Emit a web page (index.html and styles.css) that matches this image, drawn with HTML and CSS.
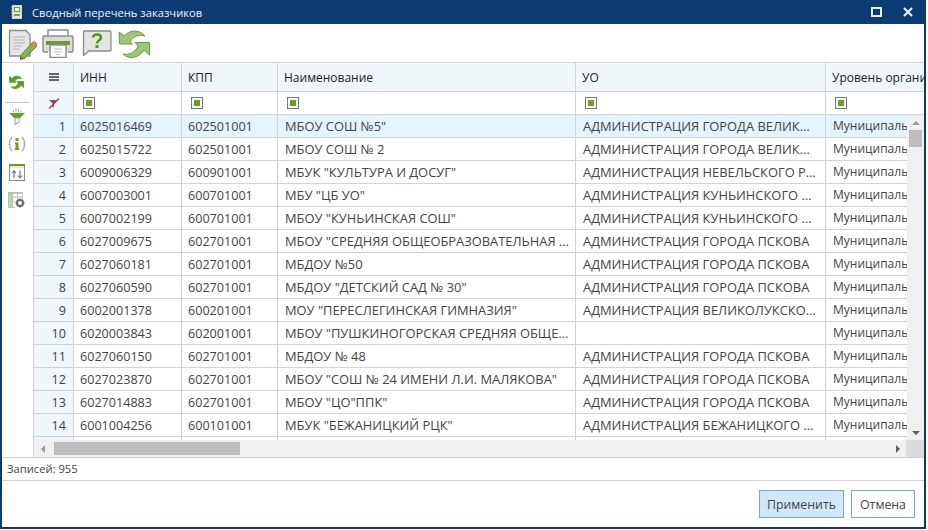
FILE: index.html
```html
<!DOCTYPE html>
<html lang="en">
<head>
    <meta charset="UTF-8">
    <title>Сводный перечень заказчиков</title>
    <link rel="stylesheet" href="styles.css">
</head>
<body>

<div class="window">
    <div class="titlebar">
        <svg class="title-icon" width="11" height="14" viewBox="0 0 11 14">
            <rect x="1.5" y="0.5" width="9" height="13" fill="#dfe6e2" stroke="#cfd6d6"/>
            <path d="M0 2 H2 M0 5 H2 M0 8 H2 M0 11 H2" stroke="#b8c4cc" stroke-width="1"/>
            <rect x="3.5" y="2.5" width="5" height="4" fill="#eef3e4" stroke="#6d9c2e"/>
            <rect x="3" y="9" width="6" height="2" fill="#7fa648"/>
        </svg>
        <span class="title-text">Сводный перечень заказчиков</span>
        <div class="title-buttons">
            <svg width="12" height="10" viewBox="0 0 12 10"><rect x="1" y="1" width="9" height="8" fill="none" stroke="#e8eef5" stroke-width="2"/></svg>
            <svg width="10" height="10" viewBox="0 0 10 10"><path d="M1 1 L9 9 M9 1 L1 9" stroke="#e8eef5" stroke-width="2.2"/></svg>
        </div>
    </div>

    <div class="toolbar">
        <svg width="30" height="32" viewBox="0 0 30 32">
            <path d="M1.5 1.5 H18 L22 6 V27 H1.5 Z" fill="#e6e6e6" stroke="#8c8c8c" stroke-width="1.3"/>
            <path d="M5 8 H17 M5 11 H17 M5 14 H17 M5 17 H14 M5 20 H11" stroke="#b5b5b5" stroke-width="1"/>
            <path d="M12 27 L25 13 L29 17 L16 30 Z" fill="#86b34a" stroke="#5e8f2a" stroke-width="1"/>
            <path d="M24 14 L26 11.5 L29.5 15 L27.5 17.5 Z" fill="#e9707a"/>
            <path d="M12 27 L16 30 L12 31 Z" fill="#666"/>
        </svg>
        <svg class="tool-print" width="32" height="29" viewBox="0 0 32 29">
            <path d="M6 8 V1 H26 V8" fill="#fff" stroke="#8c8c8c" stroke-width="1.4"/>
            <path d="M6 23 H2 A1 1 0 0 1 1 22 V8 A1 1 0 0 1 2 7 H30 A1 1 0 0 1 31 8 V22 A1 1 0 0 1 30 23 H26" fill="#dcdcdc" stroke="#8c8c8c" stroke-width="1.4"/>
            <rect x="4" y="12" width="24" height="4" fill="#6d9c2e"/>
            <rect x="8" y="16" width="16" height="12.5" fill="#fff" stroke="#8c8c8c" stroke-width="1.4"/>
            <path d="M12 20 H20 M12 23 H20 M14 25.5 H18" stroke="#bdbdbd" stroke-width="1"/>
        </svg>
        <svg class="tool-help" width="30" height="26" viewBox="0 0 30 26">
            <path d="M1.5 1 H28 A1 1 0 0 1 29 2 V20 A1 1 0 0 1 28 21 H7 L1.5 25.5 V2 A1 1 0 0 1 2 1 Z" fill="#e4e4e4" stroke="#8c8c8c" stroke-width="1.3"/>
            <path d="M11 7.5 C11 3.5 19 3.5 19 7.5 C19 10.5 15 10 15 13.5" fill="none" stroke="#4f9a1e" stroke-width="2.6"/>
            <rect x="13.5" y="15" width="3" height="3" fill="#4f9a1e"/>
        </svg>
        <svg class="tool-sync" width="32" height="31" viewBox="0 0 32 31">
            <path d="M1 3 L6.5 7 C10 2 20 -1 27 7 C21 5.5 15 7 12 13 L14.5 15 L1.5 15 Z" fill="#a2c37c" stroke="#6b9c3a" stroke-width="1"/>
            <path d="M31.5 13.5 L31.5 26 L26 21 C21 29 11 31 5 25 C11 26 17 24 20 17 L17 13.5 Z" fill="#a2c37c" stroke="#6b9c3a" stroke-width="1"/>
        </svg>
    </div>

    <div class="main">
        <div class="sidebar">
            <svg class="side-sync" width="15" height="15" viewBox="0 0 32 31">
                <path d="M1 3 L6.5 7 C10 2 20 -1 27 7 C21 5.5 15 7 12 13 L14.5 15 L1.5 15 Z" fill="#5c9e22" stroke="#5c9e22" stroke-width="2"/>
                <path d="M31.5 13.5 L31.5 26 L26 21 C21 29 11 31 5 25 C11 26 17 24 20 17 L17 13.5 Z" fill="#5c9e22" stroke="#5c9e22" stroke-width="2"/>
            </svg>
            <div class="side-sep"></div>
            <div class="side-item">
                <svg width="16" height="17" viewBox="0 0 16 17">
                    <path d="M0 5 H16 L10.5 10.5 H5.5 Z" fill="#6d9c2e"/>
                    <path d="M6 10.5 V16.5 L10 14 V10.5" fill="#fff" stroke="#999" stroke-width="1"/>
                    <path d="M4.5 4.5 V2 M7 4.5 V0 M9.5 4.5 V1 M12 4.5 V3" stroke="#aaa" stroke-width="1"/>
                </svg>
            </div>
            <div class="side-item">
                <svg width="18" height="16" viewBox="0 0 18 16">
                    <path d="M4 1 C0.5 5 0.5 11 4 15 M14 1 C17.5 5 17.5 11 14 15" fill="none" stroke="#a6a6a6" stroke-width="1.4"/>
                    <rect x="7.5" y="2" width="3" height="3" fill="#6d9c2e"/>
                    <path d="M7 6.5 H10.5 V12.5 H11.5 V14 H6.5 V12.5 H7.5 V8 H7 Z" fill="#6d9c2e"/>
                </svg>
            </div>
            <div class="side-item">
                <svg width="16" height="17" viewBox="0 0 16 17">
                    <rect x="0.5" y="0.5" width="15" height="16" fill="#fff" stroke="#8c8c8c"/>
                    <rect x="0" y="0" width="16" height="2" fill="#6d9c2e"/>
                    <rect x="1" y="2" width="14" height="2" fill="#e3edd2"/>
                    <path d="M5 14 V7 M3 9 L5 6.5 L7 9 M11 6.5 V13.5 M9 11.5 L11 14 L13 11.5" fill="none" stroke="#555" stroke-width="1"/>
                </svg>
            </div>
            <div class="side-item">
                <svg width="17" height="16" viewBox="0 0 17 16">
                    <rect x="0" y="0" width="4" height="15" fill="#a4c27a" opacity="0.7"/>
                    <rect x="0" y="0" width="14" height="2" fill="#a4c27a" opacity="0.7"/>
                    <path d="M0.5 0.5 H14.5 V7 M0.5 0.5 V15.5 H7 M0.5 5 H14 M0.5 10 H7 M4.5 0.5 V15 M9.5 0.5 V7" fill="none" stroke="#bdbdbd"/>
                    <circle cx="12" cy="11" r="3" fill="none" stroke="#666" stroke-width="2"/>
                    <path d="M12 6.5 V8 M12 14 V15.5 M7.5 11 H9 M15 11 H16.5 M9 8 L10 9 M14 13 L15 14 M15 8 L14 9 M10 13 L9 14" stroke="#666" stroke-width="1.4"/>
                </svg>
            </div>
        </div>

        <div class="grid">
            <div class="head-row">
                <div class="cell num head-menu"><span class="burger"></span></div>
                <div class="cell inn">ИНН</div>
                <div class="cell kpp">КПП</div>
                <div class="cell name">Наименование</div>
                <div class="cell uo">УО</div>
                <div class="cell level">Уровень организации</div>
            </div>
            <div class="filter-row">
                <div class="cell num filter-clear">
                    <svg width="12" height="11" viewBox="0 0 12 11">
                        <path d="M1 2 H9 L6 5.5 V9 L4.5 9.5 V5.5 Z" fill="#666"/>
                        <path d="M1 10.5 L11 0.5" stroke="#e0202a" stroke-width="1.2"/>
                    </svg>
                </div>
                <div class="cell inn"><span class="check"></span></div>
                <div class="cell kpp"><span class="check"></span></div>
                <div class="cell name"><span class="check"></span></div>
                <div class="cell uo"><span class="check"></span></div>
                <div class="cell level"><span class="check"></span></div>
            </div>
            <div class="body">
                <div class="rows" id="rows"></div>
                <div class="vscroll">
                    <span class="arrow up"></span>
                    <span class="vthumb"></span>
                    <span class="arrow down"></span>
                </div>
            </div>
            <div class="hscroll">
                <span class="arrow left"></span>
                <span class="hthumb"></span>
                <span class="arrow right"></span>
                <span class="corner"></span>
            </div>
        </div>
    </div>

    <div class="status">Записей: 955</div>

    <div class="footer">
        <button class="btn btn-active">Применить</button>
        <button class="btn">Отмена</button>
    </div>
</div>

<script>
    var data = [
        ['6025016469', '602501001', 'МБОУ СОШ №5"', 'АДМИНИСТРАЦИЯ ГОРОДА ВЕЛИКИЕ ЛУКИ'],
        ['6025015722', '602501001', 'МБОУ СОШ № 2', 'АДМИНИСТРАЦИЯ ГОРОДА ВЕЛИКИЕ ЛУКИ'],
        ['6009006329', '600901001', 'МБУК "КУЛЬТУРА И ДОСУГ"', 'АДМИНИСТРАЦИЯ НЕВЕЛЬСКОГО РАЙОНА'],
        ['6007003001', '600701001', 'МБУ "ЦБ УО"', 'АДМИНИСТРАЦИЯ КУНЬИНСКОГО РАЙОНА'],
        ['6007002199', '600701001', 'МБОУ "КУНЬИНСКАЯ СОШ"', 'АДМИНИСТРАЦИЯ КУНЬИНСКОГО РАЙОНА'],
        ['6027009675', '602701001', 'МБОУ "СРЕДНЯЯ ОБЩЕОБРАЗОВАТЕЛЬНАЯ ШКОЛА № 1"', 'АДМИНИСТРАЦИЯ ГОРОДА ПСКОВА'],
        ['6027060181', '602701001', 'МБДОУ №50', 'АДМИНИСТРАЦИЯ ГОРОДА ПСКОВА'],
        ['6027060590', '602701001', 'МБДОУ "ДЕТСКИЙ САД № 30"', 'АДМИНИСТРАЦИЯ ГОРОДА ПСКОВА'],
        ['6002001378', '600201001', 'МОУ "ПЕРЕСЛЕГИНСКАЯ ГИМНАЗИЯ"', 'АДМИНИСТРАЦИЯ ВЕЛИКОЛУКСКОГО РАЙОНА'],
        ['6020003843', '602001001', 'МБОУ "ПУШКИНОГОРСКАЯ СРЕДНЯЯ ОБЩЕОБРАЗОВАТЕЛЬНАЯ"', ''],
        ['6027060150', '602701001', 'МБДОУ № 48', 'АДМИНИСТРАЦИЯ ГОРОДА ПСКОВА'],
        ['6027023870', '602701001', 'МБОУ "СОШ № 24 ИМЕНИ Л.И. МАЛЯКОВА"', 'АДМИНИСТРАЦИЯ ГОРОДА ПСКОВА'],
        ['6027014883', '602701001', 'МБОУ "ЦО"ППК"', 'АДМИНИСТРАЦИЯ ГОРОДА ПСКОВА'],
        ['6001004256', '600101001', 'МБУК "БЕЖАНИЦКИЙ РЦК"', 'АДМИНИСТРАЦИЯ БЕЖАНИЦКОГО РАЙОНА'],
        ['', '', '', '']
    ];

    var html = '';
    data.forEach(function (r, i) {
        html += '<div class="row' + (i === 0 ? ' row-selected' : '') + '">' +
            '<div class="cell num">' + (r[0] ? i + 1 : '') + '</div>' +
            '<div class="cell inn">' + r[0] + '</div>' +
            '<div class="cell kpp">' + r[1] + '</div>' +
            '<div class="cell name">' + r[2] + '</div>' +
            '<div class="cell uo">' + r[3] + '</div>' +
            '<div class="cell level">' + (r[0] ? 'Муниципальный' : '') + '</div>' +
            '</div>';
    });
    document.getElementById('rows').innerHTML = html;
</script>

</body>
</html>
```

FILE: styles.css
```css
html, body {
    margin: 0;
    background: #fff;
}

body {
    font-family: "Open Sans", "Noto Sans", sans-serif;
    font-size: 12px;
    color: #444;
}

.window {
    width: 926px;
    height: 529px;
    box-sizing: border-box;
    border: 2px solid #0b3b70;
    border-top: 0;
    display: flex;
    flex-direction: column;
    overflow: hidden;
}

.titlebar {
    height: 24px;
    flex: none;
    background: #0b3b70;
    display: flex;
    align-items: center;
    padding: 0 6px 0 9px;
    color: #fff;
}

.title-icon {
    margin-right: 10px;
}

.title-text {
    font-size: 11.2px;
    color: #eaf3fb;
}

.title-buttons {
    margin-left: auto;
    display: flex;
    align-items: center;
    gap: 20px;
    padding-right: 5px;
}

.toolbar {
    height: 39px;
    flex: none;
    display: flex;
    align-items: flex-start;
    padding: 5px 0 0 6px;
    box-sizing: border-box;
    border-bottom: 1px solid #d4d4d4;
}

.tool-print {
    margin-left: 4px;
}

.tool-help {
    margin-left: 8px;
    margin-top: 1px;
}

.tool-sync {
    margin-left: 6px;
}

.main {
    flex: none;
    height: 394px;
    display: flex;
    border-bottom: 1px solid #cfcfcf;
    box-sizing: content-box;
}

.sidebar {
    width: 32px;
    flex: none;
    box-sizing: border-box;
    border-right: 1px solid #d4d4d4;
    display: flex;
    flex-direction: column;
    align-items: center;
    padding: 12px 2px 0 0;
}

.side-sep {
    width: 24px;
    height: 1px;
    background: #c8c8c8;
    margin: 12px 0 5px;
}

.side-item {
    height: 28px;
    flex: none;
}

.grid {
    flex: 1;
    min-width: 0;
    display: flex;
    flex-direction: column;
    overflow: hidden;
}

.head-row,
.filter-row,
.row {
    display: flex;
    flex: none;
    border-bottom: 1px solid #d0d4d8;
    box-sizing: border-box;
}

.head-row {
    height: 29px;
    background: #eff7fb;
    color: #222;
}

.filter-row {
    height: 23px;
}

.cell {
    flex: none;
    box-sizing: border-box;
    border-right: 1px solid #d0d4d8;
    padding: 0 6px;
    display: flex;
    align-items: center;
    white-space: nowrap;
    overflow: hidden;
}

.num {
    width: 40px;
    justify-content: flex-end;
    background: #eff7fb;
    padding: 0 7px 0 0;
}

.inn { width: 108px; }
.kpp { width: 96px; }
.name { width: 298px; }
.uo { width: 250px; }
.level { width: 120px; border-right: 0; }

.row .cell {
    font-size: 12.6px;
}

.row .name,
.row .uo,
.row .level {
    display: block;
    font-size: 12.9px;
    padding: 0 5px 0 7px;
    line-height: 22px;
    text-overflow: ellipsis;
}

.row .uo {
    padding-right: 8px;
}

.row .level {
    font-size: 12px;
    text-overflow: clip;
}

.head-menu,
.filter-clear {
    justify-content: center;
    padding: 0;
}

.burger {
    width: 10px;
    height: 2px;
    background: #666;
    box-shadow: 0 -3px 0 #666, 0 3px 0 #666;
}

.check {
    width: 12px;
    height: 12px;
    box-sizing: border-box;
    border: 1px solid #777;
    padding: 2px;
    background: #6d9c2e content-box;
    margin-left: 3px;
}

.body {
    flex: none;
    height: 325px;
    display: flex;
}

.rows {
    width: 873px;
    flex: none;
    overflow: hidden;
}

.row {
    height: 23px;
    width: 913px;
}

.row-selected,
.row-selected .num {
    background: #e5f3fb;
}

.vscroll {
    flex: 1;
    background: #f0f0f0;
    display: flex;
    flex-direction: column;
    align-items: center;
}

.vthumb {
    width: 13px;
    height: 17px;
    background: #bdbdbd;
    margin-top: 5px;
}

.hscroll {
    height: 17px;
    flex: none;
    background: #f0f0f0;
    display: flex;
    align-items: center;
}

.hthumb {
    width: 186px;
    height: 13px;
    background: #bdbdbd;
    margin-left: 9px;
}

.corner {
    width: 18px;
    height: 17px;
    background: #dcdcdc;
}

.arrow {
    width: 0;
    height: 0;
    border: 4px solid transparent;
}

.arrow.up {
    border-top: 0;
    border-bottom: 4px solid #9a9a9a;
    margin-top: 6px;
}

.arrow.down {
    border-bottom: 0;
    border-top: 4px solid #606060;
    margin-top: auto;
    margin-bottom: 5px;
}

.arrow.left {
    border-left: 0;
    border-right: 4px solid #9a9a9a;
    margin-left: 7px;
}

.arrow.right {
    border-right: 0;
    border-left: 4px solid #606060;
    margin-left: auto;
    margin-right: 6px;
}

.status {
    height: 22px;
    flex: none;
    display: flex;
    align-items: center;
    padding-left: 5px;
    border-bottom: 1px solid #d4d4d4;
    color: #444;
    font-size: 11.2px;
    line-height: 1;
}

.footer {
    flex: 1;
    display: flex;
    justify-content: flex-end;
    align-items: flex-start;
    gap: 7px;
    padding: 9px 9px 0 0;
}

.btn {
    font: inherit;
    font-size: 12.3px;
    height: 28px;
    padding: 0;
    width: 64px;
    background: #fff;
    color: #444;
    border: 1px solid #7ba7d0;
    border-radius: 0;
}

.btn-active {
    width: 85px;
    background: #d0e8f8;
}
```
